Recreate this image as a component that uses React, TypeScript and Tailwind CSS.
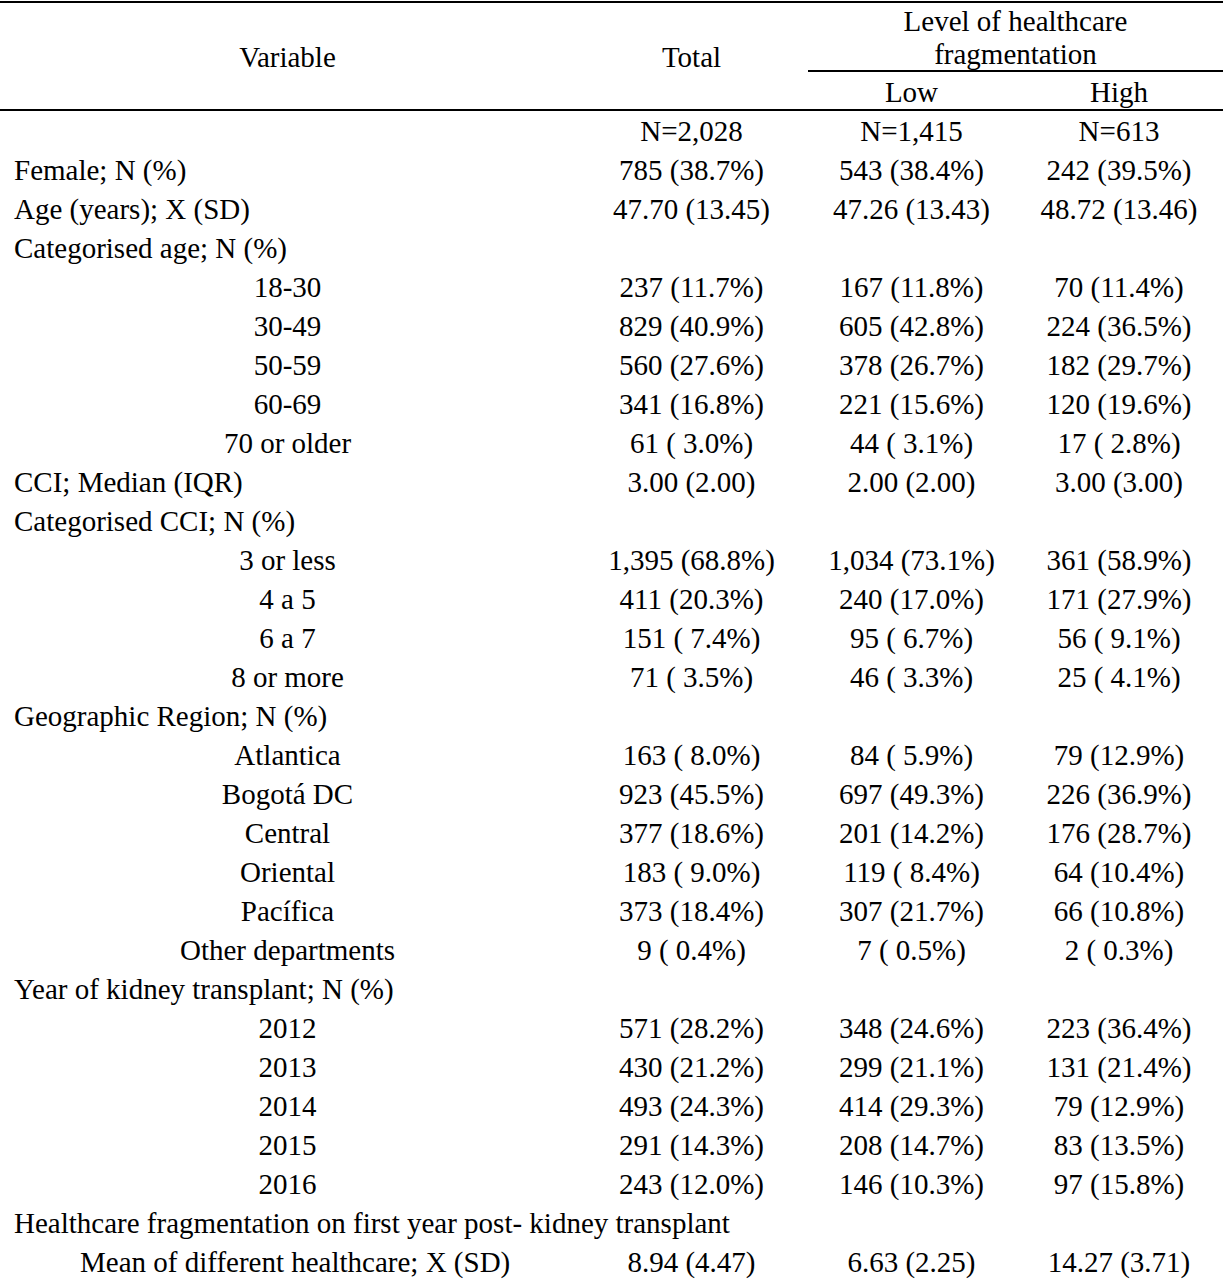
const rows: { label: string; kind: "head" | "sub" | "wide" | "indent"; v?: [string, string, string] }[] = [
  { label: "", kind: "sub", v: ["N=2,028", "N=1,415", "N=613"] },
  { label: "Female; N (%)", kind: "head", v: ["785 (38.7%)", "543 (38.4%)", "242 (39.5%)"] },
  { label: "Age (years); X (SD)", kind: "head", v: ["47.70 (13.45)", "47.26 (13.43)", "48.72 (13.46)"] },
  { label: "Categorised age; N (%)", kind: "head" },
  { label: "18-30", kind: "sub", v: ["237 (11.7%)", "167 (11.8%)", "70 (11.4%)"] },
  { label: "30-49", kind: "sub", v: ["829 (40.9%)", "605 (42.8%)", "224 (36.5%)"] },
  { label: "50-59", kind: "sub", v: ["560 (27.6%)", "378 (26.7%)", "182 (29.7%)"] },
  { label: "60-69", kind: "sub", v: ["341 (16.8%)", "221 (15.6%)", "120 (19.6%)"] },
  { label: "70 or older", kind: "sub", v: ["61 ( 3.0%)", "44 ( 3.1%)", "17 ( 2.8%)"] },
  { label: "CCI; Median (IQR)", kind: "head", v: ["3.00 (2.00)", "2.00 (2.00)", "3.00 (3.00)"] },
  { label: "Categorised CCI; N (%)", kind: "head" },
  { label: "3 or less", kind: "sub", v: ["1,395 (68.8%)", "1,034 (73.1%)", "361 (58.9%)"] },
  { label: "4 a 5", kind: "sub", v: ["411 (20.3%)", "240 (17.0%)", "171 (27.9%)"] },
  { label: "6 a 7", kind: "sub", v: ["151 ( 7.4%)", "95 ( 6.7%)", "56 ( 9.1%)"] },
  { label: "8 or more", kind: "sub", v: ["71 ( 3.5%)", "46 ( 3.3%)", "25 ( 4.1%)"] },
  { label: "Geographic Region; N (%)", kind: "head" },
  { label: "Atlantica", kind: "sub", v: ["163 ( 8.0%)", "84 ( 5.9%)", "79 (12.9%)"] },
  { label: "Bogotá DC", kind: "sub", v: ["923 (45.5%)", "697 (49.3%)", "226 (36.9%)"] },
  { label: "Central", kind: "sub", v: ["377 (18.6%)", "201 (14.2%)", "176 (28.7%)"] },
  { label: "Oriental", kind: "sub", v: ["183 ( 9.0%)", "119 ( 8.4%)", "64 (10.4%)"] },
  { label: "Pacífica", kind: "sub", v: ["373 (18.4%)", "307 (21.7%)", "66 (10.8%)"] },
  { label: "Other departments", kind: "sub", v: ["9 ( 0.4%)", "7 ( 0.5%)", "2 ( 0.3%)"] },
  { label: "Year of kidney transplant; N (%)", kind: "head" },
  { label: "2012", kind: "sub", v: ["571 (28.2%)", "348 (24.6%)", "223 (36.4%)"] },
  { label: "2013", kind: "sub", v: ["430 (21.2%)", "299 (21.1%)", "131 (21.4%)"] },
  { label: "2014", kind: "sub", v: ["493 (24.3%)", "414 (29.3%)", "79 (12.9%)"] },
  { label: "2015", kind: "sub", v: ["291 (14.3%)", "208 (14.7%)", "83 (13.5%)"] },
  { label: "2016", kind: "sub", v: ["243 (12.0%)", "146 (10.3%)", "97 (15.8%)"] },
  { label: "Healthcare fragmentation on first year post- kidney transplant", kind: "wide" },
  { label: "Mean of different healthcare; X (SD)", kind: "indent", v: ["8.94 (4.47)", "6.63 (2.25)", "14.27 (3.71)"] },
];

const cols = "grid grid-cols-[575px_233px_207px_208px]";

export default function App() {
  return (
    <div className="w-[1223px] h-[1280px] bg-white text-black text-[29px] leading-[33px] font-['Liberation_Serif','Times_New_Roman',serif] overflow-hidden">
      {/* header */}
      <div className={`${cols} mt-px border-t-2 border-black border-b-2`}>
        <div className="row-span-2 flex items-center justify-center pt-[3px]">Variable</div>
        <div className="row-span-2 flex items-center justify-center pt-[3px]">Total</div>
        <div className="col-span-2 h-[69px] pt-[3px] flex flex-col items-center justify-center border-b-2 border-black text-center">
          <span>Level of healthcare</span>
          <span>fragmentation</span>
        </div>
        <div className="h-[37px] pt-[4px] flex items-center justify-center">Low</div>
        <div className="h-[37px] pt-[4px] flex items-center justify-center">High</div>
      </div>

      {/* body */}
      {rows.map((r, i) => (
        <div key={i} className={`${cols} h-[39px] pt-[2px] items-center whitespace-pre`}>
          {r.kind === "wide" ? (
            <div className="col-span-4 pl-[14px]">{r.label}</div>
          ) : (
            <>
              <div
                className={
                  r.kind === "head" ? "pl-[14px]" : r.kind === "indent" ? "pl-[80px]" : "text-center"
                }
              >
                {r.label}
              </div>
              <div className="text-center">{r.v?.[0]}</div>
              <div className="text-center">{r.v?.[1]}</div>
              <div className="text-center">{r.v?.[2]}</div>
            </>
          )}
        </div>
      ))}
    </div>
  );
}
